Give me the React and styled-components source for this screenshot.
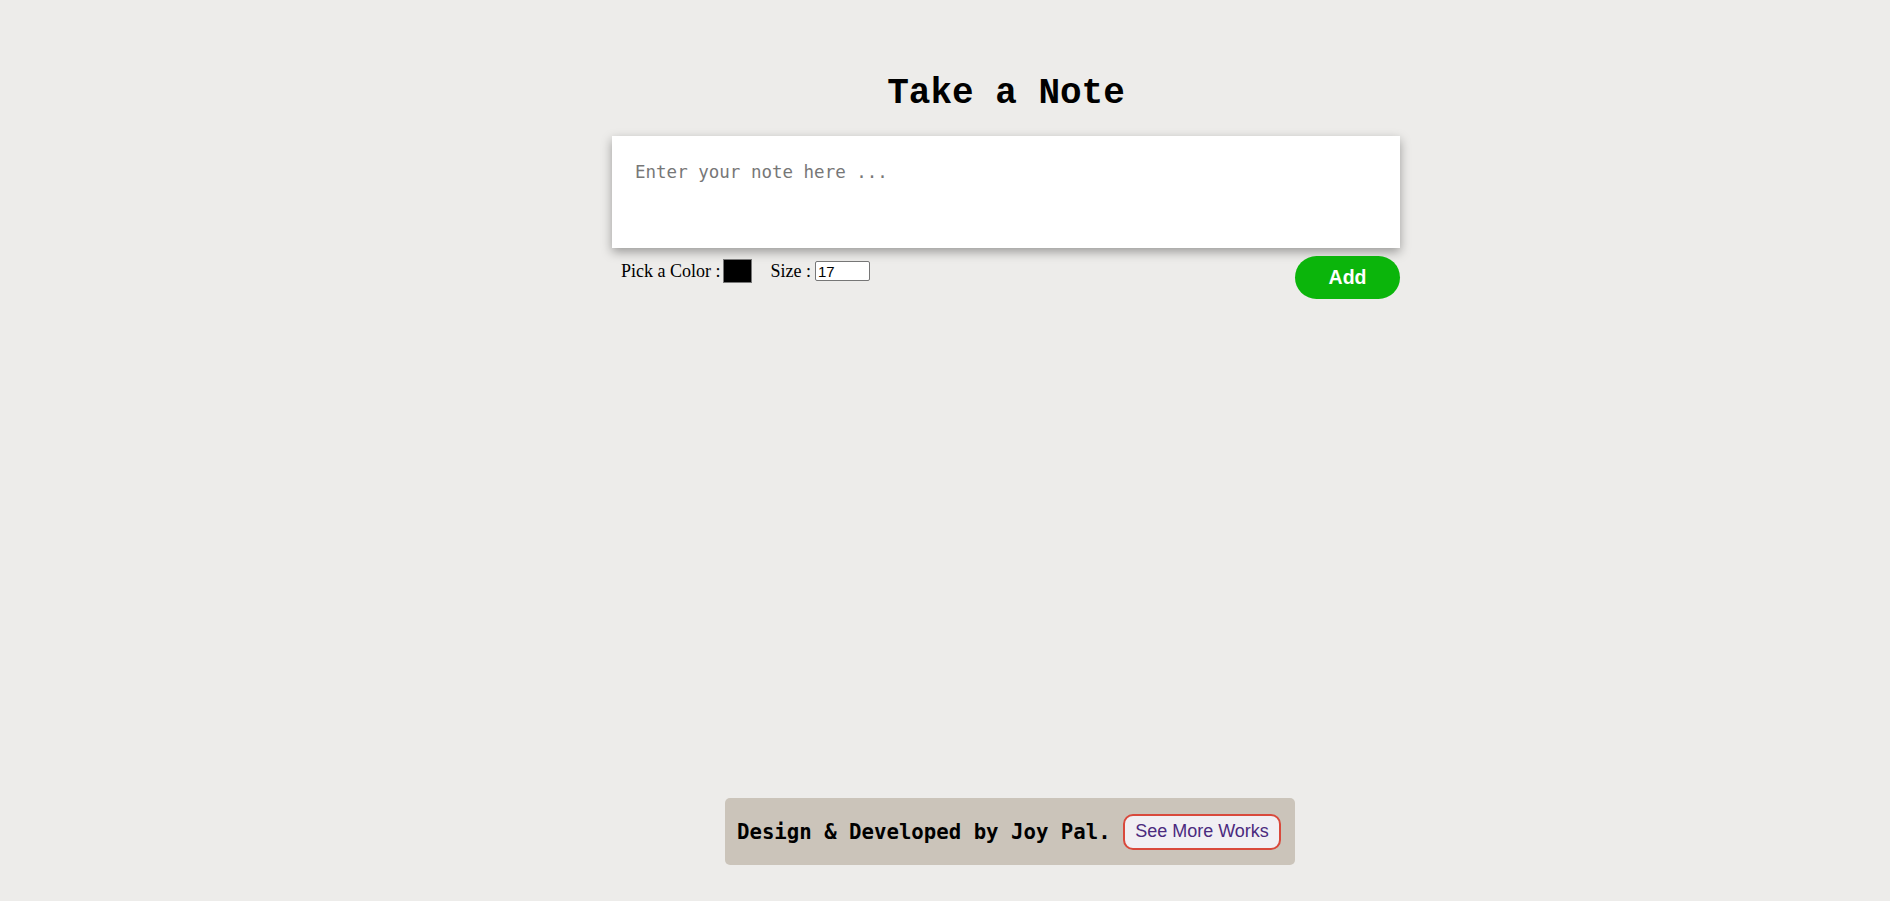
import React, { useState } from "react";
import styled, { createGlobalStyle } from "styled-components";

const GlobalStyle = createGlobalStyle`
  * {
    box-sizing: border-box;
  }
  html, body {
    margin: 0;
    padding: 0;
    background-color: #edecea;
  }
`;

const Page = styled.div`
  min-height: 100vh;
  display: flex;
  flex-direction: column;
  align-items: center;
  padding-left: 122px;
`;

const Title = styled.h1`
  font-family: "Liberation Mono", "Courier New", monospace;
  font-size: 36px;
  font-weight: bold;
  color: #000;
  margin: 74px 0 0;
  line-height: 40px;
`;

const Editor = styled.div`
  width: 788px;
  margin-top: 22px;
`;

const NoteArea = styled.textarea`
  display: block;
  width: 100%;
  height: 112px;
  border: none;
  outline: none;
  resize: none;
  background: #fff;
  padding: 25px 23px 12px;
  font-family: "DejaVu Sans Mono", "Liberation Mono", monospace;
  font-size: 17.5px;
  line-height: 22px;
  color: #000;
  box-shadow: 0 4px 10px rgba(0, 0, 0, 0.35);

  &::placeholder {
    color: #777;
  }
`;

const Controls = styled.div`
  display: flex;
  justify-content: space-between;
  align-items: flex-start;
  margin-top: 8px;
`;

const Options = styled.div`
  display: flex;
  align-items: center;
  padding: 3px 0 0 9px;
  font-family: "Liberation Serif", "Times New Roman", serif;
  font-size: 18px;
  color: #000;
`;

const Label = styled.label`
  display: flex;
  align-items: center;
  margin-right: ${(p) => p.$gap || 0}px;
`;

const ColorInput = styled.input`
  width: 29px;
  height: 24px;
  padding: 0;
  margin: 0 0 0 2px;
  border: 1px solid #777;
  background: #000;
  cursor: pointer;

  &::-webkit-color-swatch-wrapper {
    padding: 0;
  }
  &::-webkit-color-swatch {
    border: none;
  }
`;

const SizeInput = styled.input`
  width: 55px;
  height: 20px;
  margin: 0 0 0 4px;
  padding: 0 2px;
  border: 1px solid #767676;
  border-radius: 2px;
  font-family: "Liberation Sans", Arial, sans-serif;
  font-size: 15px;
  color: #000;
  background: #fff;
  -moz-appearance: textfield;

  &::-webkit-outer-spin-button,
  &::-webkit-inner-spin-button {
    -webkit-appearance: none;
    margin: 0;
  }
`;

const AddButton = styled.button`
  width: 105px;
  height: 43px;
  border: none;
  border-radius: 22px;
  background-color: #0bb50b;
  color: #fff;
  font-family: "Liberation Sans", Arial, sans-serif;
  font-size: 19.5px;
  font-weight: bold;
  cursor: pointer;
`;

const Footer = styled.footer`
  margin: auto 0 36px 8px;
  width: 570px;
  height: 67px;
  display: flex;
  align-items: center;
  justify-content: space-between;
  padding: 0 14px 0 12px;
  background-color: #cbc4ba;
  border-radius: 5px;
`;

const Credit = styled.span`
  font-family: "DejaVu Sans Mono", "Liberation Mono", monospace;
  font-size: 20.7px;
  font-weight: bold;
  color: #000;
`;

const WorksButton = styled.a`
  display: flex;
  align-items: center;
  justify-content: center;
  width: 158px;
  height: 36px;
  border: 2.5px solid #d9493c;
  border-radius: 10px;
  background-color: #f1eff3;
  color: #4b2a7e;
  font-family: "Liberation Sans", Arial, sans-serif;
  font-size: 18px;
  text-decoration: none;
  cursor: pointer;
`;

export default function App() {
  const [note, setNote] = useState("");
  const [color, setColor] = useState("#000000");
  const [size, setSize] = useState(17);

  return (
    <>
      <GlobalStyle />
      <Page>
        <Title>Take a Note</Title>
        <Editor>
          <NoteArea
            placeholder="Enter your note here ..."
            value={note}
            onChange={(e) => setNote(e.target.value)}
          />
          <Controls>
            <Options>
              <Label $gap={19}>
                Pick a Color :
                <ColorInput
                  type="color"
                  value={color}
                  onChange={(e) => setColor(e.target.value)}
                />
              </Label>
              <Label>
                Size :
                <SizeInput
                  type="number"
                  value={size}
                  onChange={(e) => setSize(e.target.value)}
                />
              </Label>
            </Options>
            <AddButton>Add</AddButton>
          </Controls>
        </Editor>
        <Footer>
          <Credit>Design &amp; Developed by Joy Pal.</Credit>
          <WorksButton href="#">See More Works</WorksButton>
        </Footer>
      </Page>
    </>
  );
}
